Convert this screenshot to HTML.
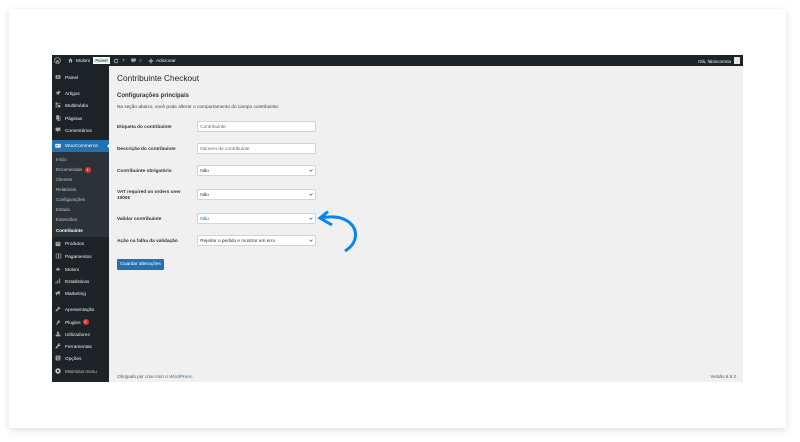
<!DOCTYPE html>
<html lang="pt"><head><meta charset="utf-8"><title>Contribuinte Checkout</title>
<style>
html,body{margin:0;padding:0;width:800px;height:442px;overflow:hidden;background:#fff;font-family:"Liberation Sans",sans-serif}
.a{position:absolute}
#wrap{position:absolute;left:0;top:0;width:800px;height:442px;filter:blur(.25px)}
#card{left:9px;top:9px;width:777px;height:419px;background:#fff;box-shadow:0 2px 7px rgba(90,105,140,.22)}
#shot{left:52px;top:55px;width:691px;height:327px;background:#f0f0f1;overflow:hidden}
#bar{left:52px;top:55px;width:691px;height:10.5px;background:#1d2327}
#side{left:52px;top:65px;width:57px;height:317px;background:#1d2327}
#sub{left:52px;top:152px;width:57px;height:85px;background:#2c3338}
#act{left:52px;top:140px;width:57px;height:12px;background:#2271b1}
.t{position:absolute;white-space:nowrap;line-height:8px;height:8px;font-size:4.75px;color:#f0f0f1;margin-top:2px}
.s{color:#c3c4c7;font-size:4.5px;margin-top:.5px}
.i{position:absolute;width:6px;height:6px;fill:#a7aaad}
.l{position:absolute;left:117px;white-space:nowrap;font-size:4.75px;font-weight:bold;color:#2c3338;line-height:6.5px;margin-top:2px}
.f{position:absolute;left:197px;width:119px;height:11px;box-sizing:border-box;background:#fff;border:1px solid #d2d3d6;border-radius:1.5px;font-size:4.75px;line-height:11px;padding-left:2.2px;color:#2c3338;white-space:nowrap}
.f svg{position:absolute;right:2px;top:3px;width:4px;height:3px}
.b{position:absolute;border-radius:50%;background:#d63638;color:#fff;font-size:3.5px;line-height:6px;width:6px;height:6px;text-align:center}
</style></head><body>
<div id="wrap">
<div class="a" id="card"></div>
<div class="a" id="shot"></div>
<div class="a" id="side"></div>
<div class="a" id="sub"></div>
<div class="a" id="act"></div>
<div class="a" style="left:106.5px;top:143.5px;width:0;height:0;border:2.6px solid transparent;border-left:0;border-right-color:#f0f0f1"></div>
<div class="a" id="bar"></div>

<svg class="i" style="left:54px;top:57px;width:7px;height:7px" viewBox="0 0 20 20"><circle cx="10" cy="10" r="8.5" fill="none" stroke="#a7aaad" stroke-width="1.8"/><path d="M5 7l3 9 2-6 2 6 3-9" fill="none" stroke="#a7aaad" stroke-width="1.8"/></svg>
<svg class="i" style="left:68px;top:58px;width:5px;height:5px" viewBox="0 0 20 20"><path d="M10 1 1 10h3v9h4v-6h4v6h4v-9h3z"/></svg>
<div class="t" style="left:76px;top:56px">Moloni</div>
<div class="a" style="left:93px;top:57px;width:17px;height:6.5px;background:#f0f0f1;border:.5px solid #fff;box-sizing:border-box;color:#1c8a3a;font-size:4.2px;font-weight:bold;line-height:5.5px;text-align:center">Painel</div>
<svg class="i" style="left:113px;top:57.5px;width:6px;height:6px" viewBox="0 0 20 20"><path d="M16 10a6 6 0 1 1-2-4.5" fill="none" stroke="#a7aaad" stroke-width="3"/><path d="M11 6l6-4v6z"/></svg>
<div class="t" style="left:122px;top:56px;color:#c3c4c7">7</div>
<svg class="i" style="left:131px;top:58px;width:5px;height:5px" viewBox="0 0 20 20"><path d="M1 2h18v12h-8l-5 5v-5H1z"/></svg>
<div class="t" style="left:139px;top:56px;color:#8c8f94">0</div>
<svg class="i" style="left:148px;top:57.5px;width:6px;height:6px" viewBox="0 0 20 20"><path d="M8 2h4v6h6v4h-6v6H8v-6H2V8h6z"/></svg>
<div class="t" style="left:156px;top:56px">Adicionar</div>
<div class="t" style="right:69px;top:56px;font-size:4.5px">Olá, fabiocorreia</div>
<div class="a" style="left:733.5px;top:57px;width:6.5px;height:6.5px;background:#e4e4e4"></div>

<svg class="i" style="left:55px;top:74px" viewBox="0 0 20 20"><path d="M2 4h16v12H2z"/><circle cx="10" cy="10" r="3" fill="#1d2327"/></svg>
<div class="t" style="left:65px;top:72.500px">Painel</div>
<svg class="i" style="left:55px;top:90px" viewBox="0 0 20 20"><path d="M12 1l7 7-3 1-3 3 0 4-2 1-3-4-6 6 5-7-4-3 1-2 4 0 3-3z"/></svg>
<div class="t" style="left:65px;top:88.500px">Artigos</div>
<svg class="i" style="left:55px;top:102px" viewBox="0 0 20 20"><path d="M2 2h7v7H2zM11 4h7v2h-7zM2 12h4v6H2zM9 10h9v8H9z"/></svg>
<div class="t" style="left:65px;top:100.500px">Multimédia</div>
<svg class="i" style="left:55px;top:115px" viewBox="0 0 20 20"><path d="M4 1h10v14H4zM7 16h9V4h2v15H7z"/></svg>
<div class="t" style="left:65px;top:113.500px">Páginas</div>
<svg class="i" style="left:55px;top:127px" viewBox="0 0 20 20"><path d="M2 2h16v11h-7l-4 5v-5H2z"/></svg>
<div class="t" style="left:65px;top:125.500px">Comentários</div>
<svg class="i" style="left:55px;top:143px" viewBox="0 0 20 20"><path d="M1 3h18v12H12l-2 3-1-3H1z" fill="#fff"/><path d="M4 7l1 4 2-3 2 3 1-4M12 9h5" stroke="#2271b1" fill="none" stroke-width="1.4"/></svg>
<div class="t" style="left:65px;top:141px;color:#fff">WooCommerce</div>

<div class="t s" style="left:56px;top:155.500px">Início</div>
<div class="t s" style="left:56px;top:165.500px">Encomendas</div>
<div class="b" style="left:84.500px;top:166.500px">1</div>
<div class="t s" style="left:56px;top:175.500px">Clientes</div>
<div class="t s" style="left:56px;top:185.500px">Relatórios</div>
<div class="t s" style="left:56px;top:195.500px">Configurações</div>
<div class="t s" style="left:56px;top:205.500px">Estado</div>
<div class="t s" style="left:56px;top:215.500px">Extensões</div>
<div class="t s" style="left:56px;top:226px;color:#fff;font-weight:bold">Contribuinte</div>

<svg class="i" style="left:55px;top:241px" viewBox="0 0 20 20"><path d="M2 3h16v14H2z"/><path d="M5 7h10" stroke="#1d2327" stroke-width="2"/></svg>
<div class="t" style="left:65px;top:239px">Produtos</div>
<svg class="i" style="left:54.500px;top:253px;width:7px" viewBox="0 0 20 20"><path d="M2 3h16v14H2z" fill="none" stroke="#a7aaad" stroke-width="2"/><path d="M8 6h4v8H8z"/></svg>
<div class="t" style="left:65px;top:251.500px">Pagamentos</div>
<svg class="i" style="left:55px;top:266px" viewBox="0 0 20 20"><path d="M2 7l3 8h10l3-8-4 3-4-6-4 6z"/></svg>
<div class="t" style="left:65px;top:264.500px">Moloni</div>
<svg class="i" style="left:55px;top:278px" viewBox="0 0 20 20"><path d="M2 12h3v6H2zM8 7h3v11H8zM14 2h3v16h-3z"/></svg>
<div class="t" style="left:65px;top:276.500px">Estatísticas</div>
<svg class="i" style="left:55px;top:290px" viewBox="0 0 20 20"><path d="M2 7h5l9-5v14l-9-4H6l1 6H4l-1-6H2z"/></svg>
<div class="t" style="left:65px;top:288.500px">Marketing</div>
<svg class="i" style="left:55px;top:306px" viewBox="0 0 20 20"><path d="M12 2l6 6-3 3-2-1-7 8-4-1 0-3 8-7-1-2z"/></svg>
<div class="t" style="left:65px;top:304.500px">Apresentação</div>
<svg class="i" style="left:55px;top:319px" viewBox="0 0 20 20"><path d="M12 2l2 2-3 3 2 2 3-3 2 2-3 4-3 1-5 6-4-1 5-6 0-3z"/></svg>
<div class="t" style="left:65px;top:317.500px">Plugins</div>
<div class="b" style="left:82.500px;top:319px">2</div>
<svg class="i" style="left:55px;top:331px" viewBox="0 0 20 20"><circle cx="10" cy="6" r="4"/><path d="M2 18v-3c0-3 3-4 8-4s8 1 8 4v3z"/></svg>
<div class="t" style="left:65px;top:329.500px">Utilizadores</div>
<svg class="i" style="left:55px;top:343px" viewBox="0 0 20 20"><path d="M17 2l-3 3 1 2 2 0 2-3c1 4-2 7-6 6l-8 9-4-3 8-9c-1-4 3-7 8-5z"/></svg>
<div class="t" style="left:65px;top:341.500px">Ferramentas</div>
<svg class="i" style="left:55px;top:355px" viewBox="0 0 20 20"><path d="M2 2h16v16H2z"/><path d="M5 7h10M8 11v5M13 11v5" stroke="#1d2327" stroke-width="2"/></svg>
<div class="t" style="left:65px;top:353.500px">Opções</div>
<svg class="i" style="left:55px;top:368px" viewBox="0 0 20 20"><circle cx="10" cy="10" r="9" fill="#c3c4c7"/><circle cx="10" cy="10" r="3.500" fill="#1d2327"/></svg>
<div class="t s" style="left:65px;top:367px">Minimizar menu</div>

<div class="a" style="left:117px;top:73px;font-size:8.300px;line-height:11px;color:#1d2327;white-space:nowrap">Contribuinte Checkout</div>
<div class="a" style="left:117px;top:92px;font-size:6px;line-height:8px;font-weight:bold;color:#2c3338;white-space:nowrap">Configurações principais</div>
<div class="a" style="left:117px;top:104px;font-size:4.750px;line-height:7px;color:#3c434a;white-space:nowrap">Na seção abaixo, você pode alterar o comportamento do campo contribuinte.</div>

<div class="l" style="top:123px">Etiqueta do contribuinte</div>
<div class="f" style="top:121px;color:#646970">Contribuinte</div>
<div class="l" style="top:144.500px">Descrição do contribuinte</div>
<div class="f" style="top:142.500px;color:#646970">Número de contribuinte</div>
<div class="l" style="top:166.500px">Contribuinte obrigatório</div>
<div class="f" style="top:164.500px">Não<svg viewBox="0 0 8 6"><path d="M1 1.500l3 3 3-3" fill="none" stroke="#50575e" stroke-width="1.400"/></svg></div>
<div class="l" style="top:187.500px;white-space:normal;width:75px">VAT required on orders over 1000€</div>
<div class="f" style="top:188.500px">Não<svg viewBox="0 0 8 6"><path d="M1 1.500l3 3 3-3" fill="none" stroke="#50575e" stroke-width="1.400"/></svg></div>
<div class="l" style="top:214.500px">Validar contribuinte</div>
<div class="f" style="top:212.500px;color:#2271b1">Não<svg viewBox="0 0 8 6"><path d="M1 1.500l3 3 3-3" fill="none" stroke="#50575e" stroke-width="1.400"/></svg></div>
<div class="l" style="top:236.500px">Ação na falha da validação</div>
<div class="f" style="top:234.500px">Rejeitar o pedido e mostrar um erro<svg viewBox="0 0 8 6"><path d="M1 1.500l3 3 3-3" fill="none" stroke="#50575e" stroke-width="1.400"/></svg></div>
<div class="a" style="left:117px;top:258.500px;width:47px;height:11px;background:#2271b1;border-radius:1px;color:#fff;font-size:4.750px;line-height:12.500px;text-align:center;white-space:nowrap">Guardar alterações</div>

<svg class="a" style="left:310px;top:205px" width="55" height="52" viewBox="310 205 55 52"><path d="M345 251C358 243 358 230 350 223 342 216 331 216 320.500 218M328 211.500L320 218 332 225" fill="none" stroke="#0a84ee" stroke-width="3"/></svg>

<div class="a" style="left:117px;top:372.500px;font-size:4.600px;line-height:7px;font-style:italic;color:#50575e;white-space:nowrap">Obrigado por criar com o <span style="color:#2271b1">WordPress</span>.</div>
<div class="a" style="right:64px;top:372.500px;font-size:4.600px;line-height:7px;color:#50575e;white-space:nowrap">Versão 6.8.2</div>
</div>
</body></html>
